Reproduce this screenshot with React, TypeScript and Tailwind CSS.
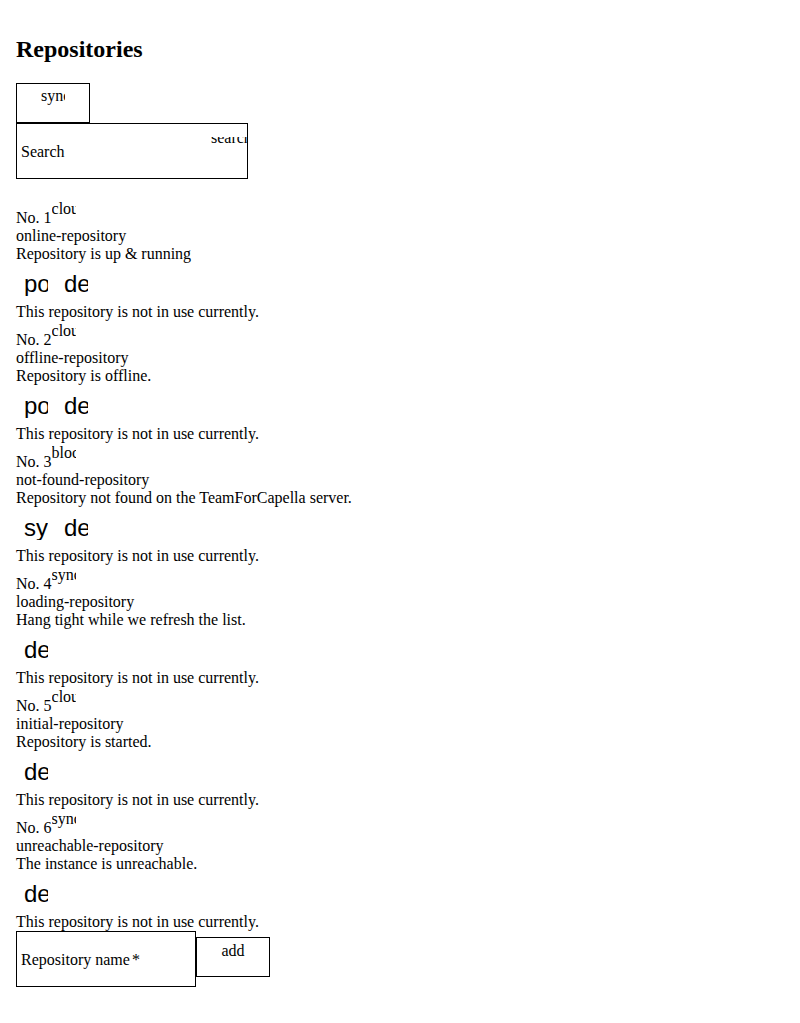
import React from "react";

type Repo = {
  no: number;
  status: string;
  name: string;
  description: string;
  actions: string[];
};

const repositories: Repo[] = [
  {
    no: 1,
    status: "cloud",
    name: "online-repository",
    description: "Repository is up & running",
    actions: ["power_settings_new", "delete"],
  },
  {
    no: 2,
    status: "cloud",
    name: "offline-repository",
    description: "Repository is offline.",
    actions: ["power_settings_new", "delete"],
  },
  {
    no: 3,
    status: "block",
    name: "not-found-repository",
    description: "Repository not found on the TeamForCapella server.",
    actions: ["sync", "delete"],
  },
  {
    no: 4,
    status: "sync",
    name: "loading-repository",
    description: "Hang tight while we refresh the list.",
    actions: ["delete"],
  },
  {
    no: 5,
    status: "cloud",
    name: "initial-repository",
    description: "Repository is started.",
    actions: ["delete"],
  },
  {
    no: 6,
    status: "sync",
    name: "unreachable-repository",
    description: "The instance is unreachable.",
    actions: ["delete"],
  },
];

// icon font is missing, so ligature names show as clipped text
const Icon = ({ name, className = "" }: { name: string; className?: string }) => (
  <span className={`block w-6 overflow-hidden whitespace-nowrap ${className}`}>
    {name}
  </span>
);

const RepositoryItem = ({ repo }: { repo: Repo }) => (
  <div>
    {/* number + status icon */}
    <div className="flex h-[28px] items-start">
      <span className="mt-[10px] leading-[18px] whitespace-nowrap">
        No. {repo.no}
      </span>
      <Icon name={repo.status} className="mt-[1px] leading-[18px]" />
    </div>
    <div className="leading-[18px]">{repo.name}</div>
    <div className="leading-[18px]">{repo.description}</div>

    {/* actions */}
    <div className="flex h-10">
      {repo.actions.map((action) => (
        <button key={action} className="flex h-10 w-10 items-start px-2 pt-[9px]">
          <Icon
            name={action}
            className="h-6 font-['Liberation_Sans',Arial,sans-serif] text-[24px] leading-6"
          />
        </button>
      ))}
    </div>
    <div className="leading-[18px]">This repository is not in use currently.</div>
  </div>
);

export default function App() {
  return (
    <div className="min-h-[1023px] bg-white px-4 pt-4 font-['Liberation_Serif',serif] text-base text-black">
      <h2 className="mt-[19px] mb-5 text-2xl leading-7 font-bold">Repositories</h2>

      <button className="flex h-10 w-[74px] items-start justify-center border border-black bg-white pt-[3px]">
        <Icon name="sync" className="leading-[18px]" />
      </button>

      {/* search field */}
      <div className="relative flex h-14 w-[232px] items-start overflow-hidden border border-black pt-[19px] pl-1">
        <span className="leading-[18px]">Search</span>
        <div className="absolute top-[13px] left-[194px] h-2 w-10 overflow-hidden">
          <span className="-mt-2 block whitespace-nowrap leading-[18px]">search</span>
        </div>
      </div>

      <div className="mt-5">
        {repositories.map((repo) => (
          <RepositoryItem key={repo.no} repo={repo} />
        ))}
      </div>

      {/* add repository form */}
      <div className="flex items-start">
        <div className="flex h-14 w-[180px] items-start border border-black pt-[19px] pl-1">
          <span className="leading-[18px] whitespace-nowrap">
            Repository name<span className="ml-[2px]">*</span>
          </span>
        </div>
        <button className="mt-[6px] flex h-10 w-[74px] items-start justify-center border border-black bg-white pt-1">
          <span className="leading-[18px]">add</span>
        </button>
      </div>
    </div>
  );
}
